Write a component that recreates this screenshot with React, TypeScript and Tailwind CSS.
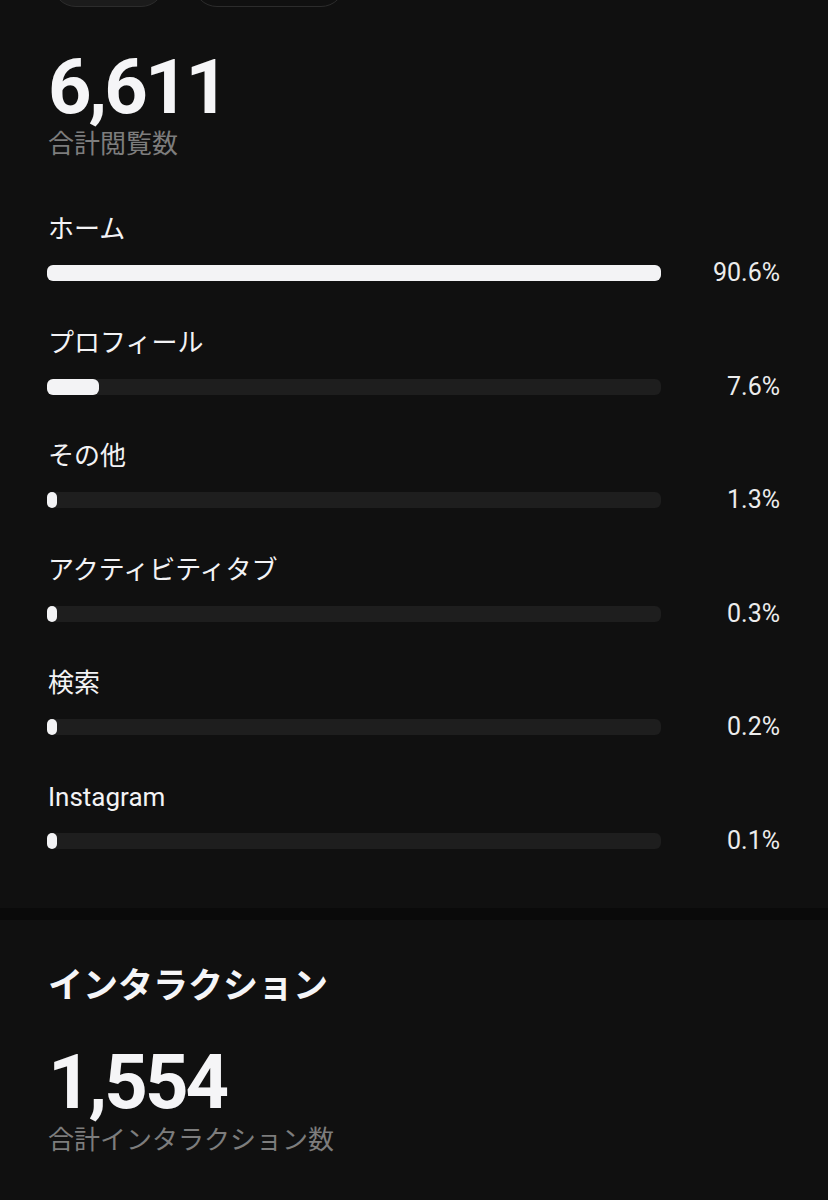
import React from 'react';

interface SourceRow {
  label: string;
  pct: number;
}

const rows: SourceRow[] = [
  { label: 'ホーム', pct: 90.6 },
  { label: 'プロフィール', pct: 7.6 },
  { label: 'その他', pct: 1.3 },
  { label: 'アクティビティタブ', pct: 0.3 },
  { label: '検索', pct: 0.2 },
  { label: 'Instagram', pct: 0.1 },
];

const font = { fontFamily: 'Roboto, "Noto Sans CJK JP", sans-serif' };

const SourceBar: React.FC<{ row: SourceRow; first: boolean }> = ({ row, first }) => {
  // bar fill is relative to the largest value, min width keeps tiny values visible
  const width = Math.max(10, (row.pct / 90.6) * 614);
  return (
    <div className={first ? 'mt-[49px]' : 'mt-[33.5px]'}>
      <div className="h-[36px] leading-[36px] text-[26px] text-[#f3f3f5]">{row.label}</div>
      <div className="mt-[8px] flex h-[36px] items-center">
        <div className="ml-[-1px] h-[16px] w-[615px] rounded-[6px] bg-[#1e1e1e]">
          <div className="h-full rounded-[6px] bg-[#f3f3f5]" style={{ width }} />
        </div>
        <div className="w-[119px] text-right text-[25px] leading-[34px] text-[#ececec]">{row.pct.toFixed(1)}%</div>
      </div>
    </div>
  );
};

export default function App() {
  return (
    <div className="min-h-[1200px] w-[828px] overflow-hidden bg-[#101010]" style={font}>
      <section className="px-12 pb-[49px]">
        <div className="flex">
          <div className="ml-[4px] mt-[-41px] h-[48px] w-[113px] rounded-full border border-[#2c2c2c] bg-[#1b1b1b]" />
          <div className="ml-[28px] mt-[-41px] h-[48px] w-[152px] rounded-full border border-[#2c2c2c]" />
        </div>
        <div className="mt-[42px] h-[76px] text-[76px] font-bold leading-[76px] tracking-[-3px] text-[#f5f5f7]">6,611</div>
        <div className="mt-[1px] h-[36px] text-[26px] leading-[36px] text-[#7d7d7d]">合計閲覧数</div>
        {rows.map((r, i) => (
          <SourceBar key={r.label} row={r} first={i === 0} />
        ))}
      </section>
      <div className="h-[12px] bg-[#0a0a0a]" />
      <section className="px-12">
        <div className="mt-[45px] h-[44px] text-[35px] font-bold leading-[44px] text-[#f5f5f7]">インタラクション</div>
        <div className="mt-[35px] h-[76px] text-[76px] font-bold leading-[76px] tracking-[-3px] text-[#f5f5f7]">1,554</div>
        <div className="mt-[2px] h-[36px] text-[26px] leading-[36px] text-[#7d7d7d]">合計インタラクション数</div>
      </section>
    </div>
  );
}
